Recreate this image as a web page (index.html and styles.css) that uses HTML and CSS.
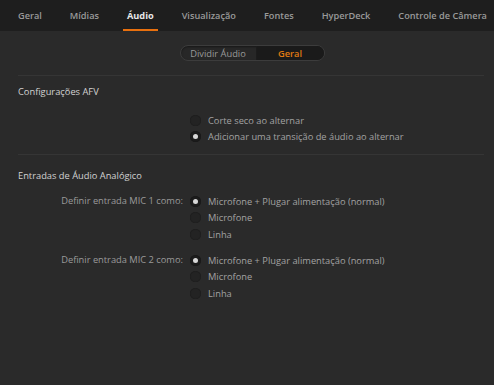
FILE: index.html
```html
<!DOCTYPE html>
<html lang="pt">
<head>
<meta charset="utf-8">
<link rel="stylesheet" href="styles.css">
</head>
<body>
<div class="app">
  <nav class="tabs">
    <span class="tab">Geral</span>
    <span class="tab">Mídias</span>
    <span class="tab active">Áudio</span>
    <span class="tab">Visualização</span>
    <span class="tab">Fontes</span>
    <span class="tab">HyperDeck</span>
    <span class="tab">Controle de Câmera</span>
  </nav>
  <div class="seg-wrap">
    <div class="seg">
      <span class="seg-item">Dividir Áudio</span>
      <span class="seg-item on">Geral</span>
    </div>
  </div>
  <section class="section first">
    <h2 class="title">Configurações AFV</h2>
    <div class="row">
      <div class="label"></div>
      <div class="opts">
        <div class="opt"><span class="radio"></span>Corte seco ao alternar</div>
        <div class="opt"><span class="radio checked"></span>Adicionar uma transição de áudio ao alternar</div>
      </div>
    </div>
  </section>
  <section class="section second">
    <h2 class="title">Entradas de Áudio Analógico</h2>
    <div class="row">
      <div class="label">Definir entrada MIC 1 como:</div>
      <div class="opts">
        <div class="opt"><span class="radio checked"></span>Microfone + Plugar alimentação (normal)</div>
        <div class="opt"><span class="radio"></span>Microfone</div>
        <div class="opt"><span class="radio"></span>Linha</div>
      </div>
    </div>
    <div class="row row2">
      <div class="label">Definir entrada MIC 2 como:</div>
      <div class="opts">
        <div class="opt"><span class="radio checked"></span>Microfone + Plugar alimentação (normal)</div>
        <div class="opt"><span class="radio"></span>Microfone</div>
        <div class="opt"><span class="radio"></span>Linha</div>
      </div>
    </div>
  </section>
</div>
</body>
</html>
```
FILE: styles.css
```css
* { box-sizing: border-box; margin: 0; padding: 0; }
html, body { width: 494px; height: 385px; background: #2a2a2a; overflow: hidden; }
body { font-family: "Open Sans", "Noto Sans", sans-serif; font-size: 9.3px; color: #9c9c9c; }
.app { width: 494px; height: 385px; background: #2a2a2a; }
.tabs {
  height: 31px; background: #1e1e1e; display: flex; align-items: stretch;
  padding-left: 18px;
}
.tab {
  display: flex; align-items: center; font-weight: 600; font-size: 9.2px; white-space: nowrap;
  color: #9a9a9a; position: relative; margin-right: 28px; padding-bottom: 1px;
}
.tab.active { color: #e8e8e8; font-weight: 700; }
.tab.active::after {
  content: ""; position: absolute; left: -4px; right: -4px; bottom: 0; height: 2px; background: #e8700e;
}
.seg-wrap { display: flex; justify-content: center; padding-top: 14px; padding-left: 10px; }
.seg {
  display: flex; height: 16px; border: 1px solid #3c3c3c; border-radius: 8px; background: #272727; overflow: hidden;
  box-shadow: inset 0 1px 2px rgba(0,0,0,0.4);
}
.seg-item { display: flex; align-items: center; justify-content: center; font-size: 9.3px; color: #9a9a9a; }
.seg-item:first-child { width: 76px; border-right: 1px solid #1c1c1c; }
.seg-item.on { width: 67px; background: #1a1a1a; color: #e07a12; font-weight: 600; }
.section { margin: 0 10px 0 18px; border-top: 1px solid #353535; }
.first { margin-top: 14px; padding-top: 9px; padding-bottom: 10px; }
.second { padding-top: 14px; }
.title { font-size: 9.3px; font-weight: 400; color: #d2d2d2; height: 14px; line-height: 14px; }
.row { display: flex; margin-top: 13px; }
.second .row { margin-top: 10px; }
.second .row2 { margin-top: 9.5px; }
.label { width: 172px; text-align: right; padding-right: 7px; height: 16px; line-height: 16px; color: #9a9a9a; }
.first .opt { height: 16px; }
.opts { display: flex; flex-direction: column; }
.opt { display: flex; align-items: center; height: 16.5px; color: #a2a2a2; white-space: nowrap; }
.radio {
  width: 11px; height: 11px; border-radius: 50%; background: #232323; margin-right: 7px; margin-left: 0;
  display: flex; align-items: center; justify-content: center; box-shadow: inset 0 0 1px rgba(0,0,0,0.6);
}
.radio.checked { background: #1c1c1c; }
.radio.checked::after { content: ""; width: 5px; height: 5px; border-radius: 50%; background: #d8d8d8; }
```
